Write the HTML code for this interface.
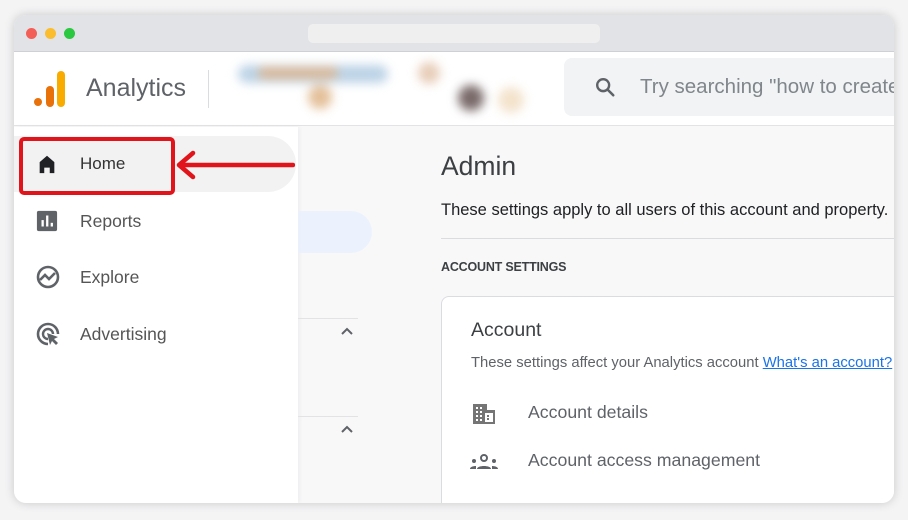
<!DOCTYPE html>
<html><head><meta charset="utf-8"><style>
*{margin:0;padding:0;box-sizing:border-box}
body{width:908px;height:520px;background:#f4f4f5;font-family:"Liberation Sans",Arial,sans-serif;position:relative;overflow:hidden}
.win{position:absolute;left:14px;top:15px;width:880px;height:488px;border-radius:12px;overflow:hidden;background:#f8f8f9;box-shadow:0 0 10px rgba(0,0,0,.18)}
.tb{position:absolute;left:0;top:0;width:880px;height:37px;background:#e2e3e6;border-bottom:1px solid #cfd0d3}
.dot{position:absolute;top:13px;width:11px;height:11px;border-radius:50%}
.url{position:absolute;left:294px;top:9px;width:292px;height:19px;border-radius:5px;background:#efeff0}
.hd{position:absolute;left:0;top:37px;width:880px;height:74px;background:#fff;border-bottom:1px solid #e3e3e6}
.side{position:absolute;left:0;top:112px;width:284px;height:376px;background:#fff;box-shadow:2px 0 4px rgba(0,0,0,.04)}
.item{position:absolute;left:0;height:40px;width:280px;font-size:17.5px;color:#555;display:flex;align-items:center}
.item span{position:absolute;left:66px}
.item svg{position:absolute;left:22px}
.t{position:absolute;color:#202124;white-space:nowrap}
</style></head><body>
<div class="win">
 <div class="tb">
  <div class="dot" style="left:12px;background:#f35f57"></div>
  <div class="dot" style="left:31px;background:#fbbd2e"></div>
  <div class="dot" style="left:50px;background:#2ac840"></div>
  <div class="url"></div>
 </div>
 <div class="hd">
  <svg style="position:absolute;left:19px;top:17px" width="34" height="38" viewBox="0 0 34 38">
   <circle cx="5" cy="33" r="4" fill="#e8710a"/>
   <rect x="13" y="17" width="8" height="21" rx="4" fill="#e8710a"/>
   <rect x="24" y="2" width="8" height="36" rx="4" fill="#f9ab00"/>
  </svg>
  <div class="t" style="left:72px;top:22px;font-size:25px;color:#5f6368">Analytics</div>
  <div style="position:absolute;left:194px;top:18px;width:1px;height:38px;background:#dadce0"></div>
  <div style="position:absolute;left:204px;top:5px;width:340px;height:66px;overflow:hidden;filter:blur(5px)">
   <div style="position:absolute;left:20px;top:8px;width:150px;height:18px;background:#bcd3e6;border-radius:9px"></div>
   <div style="position:absolute;left:40px;top:10px;width:80px;height:12px;background:#d9b898;border-radius:6px"></div>
   <div style="position:absolute;left:90px;top:28px;width:24px;height:24px;background:#e4c09a;border-radius:50%"></div>
   <div style="position:absolute;left:200px;top:5px;width:22px;height:22px;background:#e7cdb8;border-radius:50%"></div>
   <div style="position:absolute;left:240px;top:28px;width:26px;height:26px;background:#7a6a6a;border-radius:50%"></div>
   <div style="position:absolute;left:280px;top:30px;width:26px;height:26px;background:#f3e3cc;border-radius:50%"></div>
  </div>
  <div style="position:absolute;left:550px;top:6px;width:340px;height:58px;background:#f1f3f4;border-radius:8px"></div>
  <svg style="position:absolute;left:580px;top:24px" width="22" height="22" viewBox="0 0 24 24"><circle cx="10" cy="10" r="6.5" fill="none" stroke="#5f6368" stroke-width="2.6"/><path d="M15 15l6 6" stroke="#5f6368" stroke-width="2.8" stroke-linecap="round"/></svg>
  <div class="t" style="left:626px;top:23px;font-size:20.5px;color:#80868b">Try searching "how to create</div>
 </div>
 <div class="side">
  <div style="position:absolute;left:0;top:9px;width:282px;height:56px;background:#f2f2f2;border-radius:0 28px 28px 0"></div>
  <div style="position:absolute;left:5px;top:10px;width:156px;height:58px;border:4px solid #e1141b;border-radius:5px"></div>
  <svg style="position:absolute;left:161px;top:23px" width="120" height="30" viewBox="0 0 120 30"><path d="M118 15H6M18 3L4 15l14 12" fill="none" stroke="#e1141b" stroke-width="4.5" stroke-linecap="round" stroke-linejoin="round"/></svg>
  <div class="item" style="top:17px;color:#333"><svg width="22" height="22" viewBox="0 0 24 24"><path d="M4 22V10l8-7 8 7v12h-5v-6H9v6z" fill="#202124"/></svg><span style="font-size:17px">Home</span></div>
  <div class="item" style="top:74px"><svg width="22" height="22" viewBox="0 0 24 24"><rect x="1" y="1" width="22" height="22" rx="2" fill="#5f6368"/><rect x="6" y="11" width="2.5" height="7" fill="#fff"/><rect x="11" y="6" width="2.5" height="12" fill="#fff"/><rect x="16" y="14" width="2.5" height="4" fill="#fff"/></svg><span>Reports</span></div>
  <div class="item" style="top:130px"><svg width="24" height="24" viewBox="0 0 24 24"><circle cx="12" cy="12" r="10" fill="none" stroke="#5f6368" stroke-width="2.6"/><path d="M4 15l5-5 4 4 6-6" fill="none" stroke="#5f6368" stroke-width="2.6"/></svg><span>Explore</span></div>
  <div class="item" style="top:187px"><svg width="24" height="24" viewBox="0 0 24 24"><path d="M12 22A10 10 0 1 1 22 12" fill="none" stroke="#5f6368" stroke-width="2.6"/><path d="M12 17A5 5 0 1 1 17 12" fill="none" stroke="#5f6368" stroke-width="2.4"/><path d="M11 11l11 4-4 2 4 4-2 2-4-4-2 4z" fill="#5f6368"/></svg><span>Advertising</span></div>
 </div>
 <div style="position:absolute;left:284px;top:196px;width:74px;height:42px;background:#e8f0fe;border-radius:0 21px 21px 0;opacity:.8"></div>
 <div style="position:absolute;left:284px;top:303px;width:60px;height:1px;background:#e3e3e6"></div>
 <div style="position:absolute;left:284px;top:401px;width:60px;height:1px;background:#e3e3e6"></div>
 <svg style="position:absolute;left:326px;top:311px" width="14" height="10" viewBox="0 0 14 10"><path d="M2 8l5-5 5 5" fill="none" stroke="#5f6368" stroke-width="2"/></svg>
 <svg style="position:absolute;left:326px;top:409px" width="14" height="10" viewBox="0 0 14 10"><path d="M2 8l5-5 5 5" fill="none" stroke="#5f6368" stroke-width="2"/></svg>
 <div class="t" style="left:427px;top:136px;font-size:26.5px;color:#3c4043">Admin</div>
 <div class="t" style="left:427px;top:186px;font-size:16.5px">These settings apply to all users of this account and property.</div>
 <div style="position:absolute;left:427px;top:223px;width:453px;height:1px;background:#dadce0"></div>
 <div class="t" style="left:427px;top:245px;font-size:12.5px;font-weight:bold;color:#3c4043;letter-spacing:-.2px">ACCOUNT SETTINGS</div>
 <div style="position:absolute;left:427px;top:281px;width:470px;height:220px;background:#fff;border:1px solid #dadce0;border-radius:8px"></div>
 <div class="t" style="left:457px;top:304px;font-size:19.5px;color:#3c4043">Account</div>
 <div class="t" style="left:457px;top:340px;font-size:14.8px;color:#5f6368">These settings affect your Analytics account <span style="color:#1a73e8;text-decoration:underline">What's an account?</span></div>
 <svg style="position:absolute;left:458px;top:388px" width="24" height="22" viewBox="0 0 24 22"><path d="M1 1h14v6h8v14H1z" fill="#757575"/><g fill="#fff"><rect x="4" y="4" width="2" height="2"/><rect x="8" y="4" width="2" height="2"/><rect x="4" y="8" width="2" height="2"/><rect x="8" y="8" width="2" height="2"/><rect x="4" y="12" width="2" height="2"/><rect x="8" y="12" width="2" height="2"/><rect x="4" y="16" width="2" height="2"/><rect x="8" y="16" width="2" height="2"/><rect x="13" y="10" width="8" height="9"/></g><g fill="#757575"><rect x="15" y="12" width="2" height="2"/><rect x="15" y="15" width="2" height="2"/></g></svg>
 <div class="t" style="left:514px;top:387px;font-size:17.7px;color:#5f6368">Account details</div>
 <svg style="position:absolute;left:456px;top:439px" width="28" height="16" viewBox="0 0 28 16"><circle cx="14" cy="4" r="3" fill="none" stroke="#5f6368" stroke-width="2"/><path d="M7 15c0-4 14-4 14 0" fill="#5f6368"/><circle cx="4" cy="7" r="2" fill="#5f6368"/><circle cx="24" cy="7" r="2" fill="#5f6368"/><path d="M0 15c0-3 6-3 6-3v3zM28 15c0-3-6-3-6-3v3z" fill="#5f6368"/></svg>
 <div class="t" style="left:514px;top:435px;font-size:17.7px;color:#5f6368">Account access management</div>
</div>
</body></html>
